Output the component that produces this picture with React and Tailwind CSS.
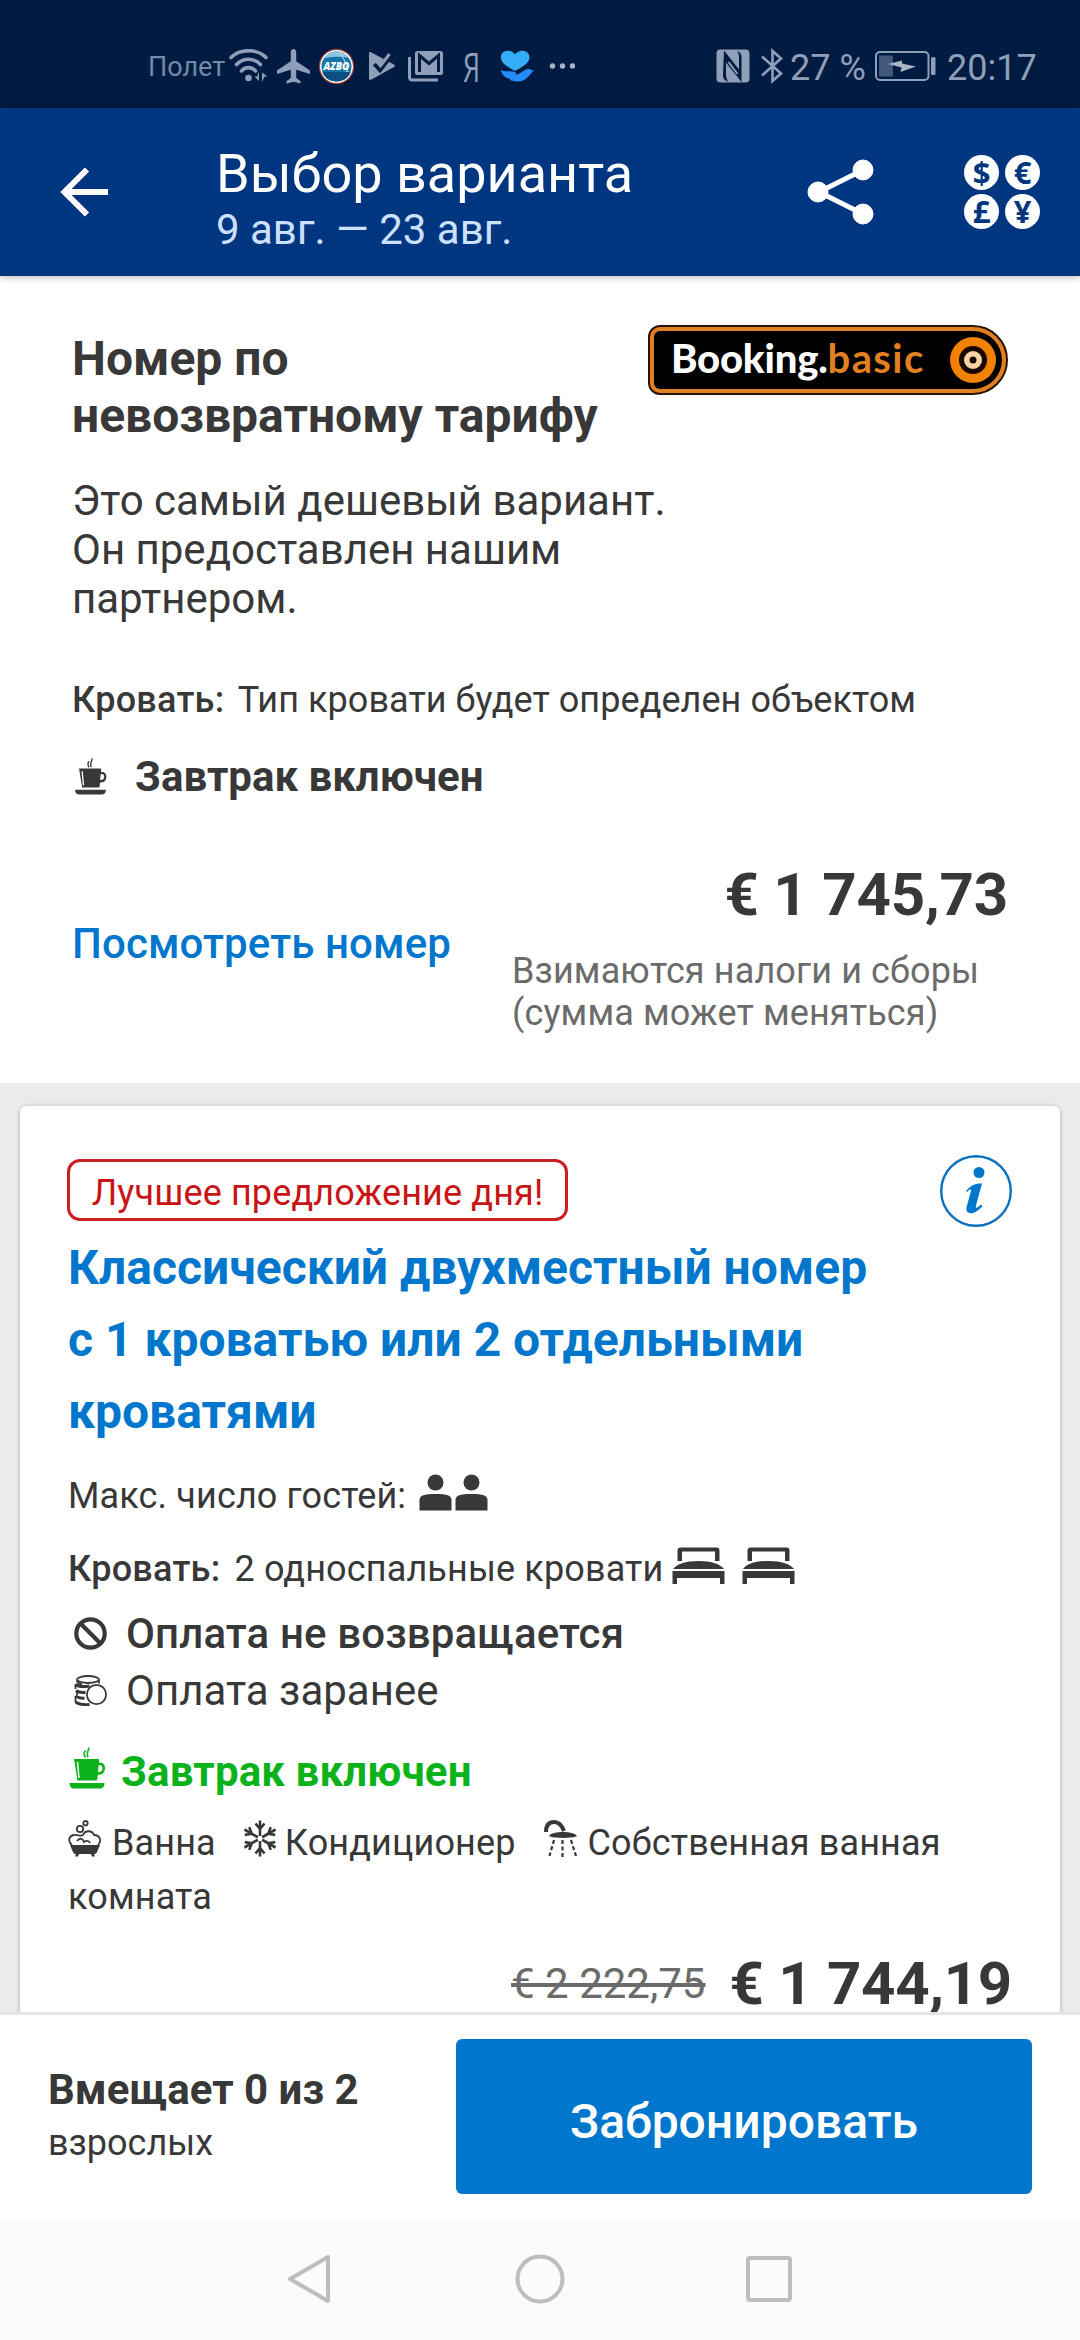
function StatusBar() {
  return (
    <div className="flex h-[108px] shrink-0 items-center bg-[#001b41] pt-6 text-[#8f9fb9]">
      <span className="ml-[148px] w-[81px] whitespace-nowrap pt-px text-[27px] leading-8 text-[#7488a8]">Полет</span>
      <WifiIcon />
      <PlaneIcon />
      <AzboIcon />
      <PlayIcon />
      <GmailIcon />
      <span className="ml-[19px] w-[17px] font-['Open_Sans'] text-[41px] leading-[41px] tracking-tighter"><span className="inline-block origin-left scale-x-[0.66]">Я</span></span>
      <HeartHandIcon />
      <svg className="ml-[14px] shrink-0" width="26" height="8" viewBox="0 0 26 8" fill="#a7b3c7">
        <circle cx="3.5" cy="4" r="2.7" />
        <circle cx="13.5" cy="4" r="2.7" />
        <circle cx="23.5" cy="4" r="2.7" />
      </svg>
      <div className="ml-auto flex items-center pr-[45px]">
        <NfcIcon />
        <BluetoothIcon />
        <span className="ml-[6px] w-[85px] whitespace-nowrap pt-[3px] text-[36px] leading-[42px]">27 %</span>
        <BatteryIcon />
        <span className="ml-[10px] w-[88px] whitespace-nowrap pt-[3px] text-[36px] leading-[42px]">20:17</span>
      </div>
    </div>
  );
}

function WifiIcon() {
  return (
    <svg className="shrink-0" width="40" height="34" viewBox="0 0 40 34" fill="none" stroke="currentColor" strokeWidth="3.6" strokeLinecap="round">
      <path d="M2 8.500C11-.5 28-.5 37 8.500" />
      <path d="M7.500 15.500C14 8.500 25 8.500 31.500 15.500" />
      <path d="M12.500 22c3.500-4.500 10.500-4.500 14 0" />
      <circle cx="19.500" cy="29" r="3.300" fill="currentColor" stroke="none" />
      <path d="M30 22.500v9.500l-4.500-4.500h2.500zM33 33v-9.500l5.500 4h-3z" fill="currentColor" stroke="none" />
    </svg>
  );
}

function PlaneIcon() {
  return (
    <svg className="ml-[7px] shrink-0" width="35" height="35" viewBox="0 0 35 35" fill="currentColor">
      <path d="M17.500 0c-1.700 0-2.700 1.300-2.700 3.200v9L1 21.500V25l13.800-4.300v8.200L10.500 32v2.600l7-1.800 7 1.800V32l-4.300-3.100v-8.200L34 25v-3.500l-13.800-9.300v-9C20.200 1.300 19.200 0 17.500 0z" />
    </svg>
  );
}

function AzboIcon() {
  return (
    <svg className="ml-[7px] shrink-0" width="37" height="37" viewBox="0 0 37 37">
      <circle cx="18.500" cy="18.500" r="17.800" fill="#8d3f36" />
      <circle cx="18.500" cy="18.500" r="16.500" fill="#fff" />
      <circle cx="18.500" cy="18.500" r="15" fill="#1674aa" />
      <path d="M6 10a15 15 0 0 1 25 0c-8-2-16-1-25 0z" fill="#8bc5e2" />
      <path d="M5 27c10 2 16-3 26-3M22 5c6 8 8 16 7 25" fill="none" stroke="#cfe6f2" />
      <path d="M4.500 24h28c-2 6-7 9.500-14 9.500S6.500 30 4.500 24z" fill="#0c4f82" />
      <text x="18.500" y="22" textAnchor="middle" fontFamily="Open Sans, sans-serif" fontWeight="800" fontStyle="italic" fontSize="10" fill="#fff">AZBO</text>
    </svg>
  );
}

function PlayIcon() {
  return (
    <svg className="ml-[13px] shrink-0" width="28" height="30" viewBox="0 0 28 30">
      <path d="M1 2.500C1 1 2.300.8 3.500 1.500L26 13.500c1.200.7 1.200 1.800 0 2.500L3.500 28.500C2 29.300 1 28.600 1 27.500z" fill="currentColor" />
      <path d="M7 12.500l5 5.500L22 5" fill="none" stroke="#001b41" strokeWidth="5.500" />
      <path d="M8.500 10.500l4 4.500L21.500 3" fill="none" stroke="currentColor" strokeWidth="3" />
    </svg>
  );
}

function GmailIcon() {
  return (
    <svg className="ml-[12px] shrink-0" width="36" height="32" viewBox="0 0 36 32">
      <path d="M1.500 7v20c0 2 1 3 3 3H30" fill="none" stroke="currentColor" strokeWidth="3" />
      <rect x="7" y="1" width="28" height="24" rx="2.500" fill="currentColor" />
      <path d="M11.500 22V5.500L21 13.500l9.500-8V22" fill="none" stroke="#001b41" strokeWidth="3" />
    </svg>
  );
}

function HeartHandIcon() {
  return (
    <svg className="ml-[20px] shrink-0" width="35" height="32" viewBox="0 0 35 32">
      <path d="M15 21C7.500 17 .8 13 .8 7.300.8 3.300 4 .7 7.800.7c3 0 5.200 1.300 7.200 3.600C17 2 19.500.7 22.300.7c4 0 7.200 2.600 7.200 6.600C29.500 13 22.500 17 15 21z" fill="#31aef5" />
      <path d="M1 19.500c3 2.500 6 1.500 9.500 1.700 4.500.3 7 1.800 5 3.600 5.500-.3 9.500-6.500 14-5.600 1.800.3 3 1.200 4.500 1.600-4 2.200-6.500 10.200-15.500 10.700-4 .2-6-1-9-1.500l1-1C6 28.500 1.500 25 1 19.500z" fill="#268cff" />
    </svg>
  );
}

function NfcIcon() {
  return (
    <svg className="shrink-0" width="34" height="34" viewBox="0 0 34 34">
      <rect x=".5" y=".5" width="33" height="33" rx="4" fill="currentColor" />
      <path d="M8 1.500l15 19V8.500c0-3-.8-5-2-7 2.200 1.500 4.500 3 4.500 6v25.500L10 13.500V25c0 3.500.8 6 2.500 8-3-1-5.500-3-5.500-6z" fill="#001b41" />
      <path d="M12.500 13l9 12" stroke="currentColor" strokeWidth="2" />
    </svg>
  );
}

function BluetoothIcon() {
  return (
    <svg className="ml-[10px] shrink-0" width="24" height="36" viewBox="0 0 24 36" fill="none" stroke="currentColor" strokeWidth="2.600">
      <path d="M2 8.500L21 25.500 12.500 33V3L21 10.500 2 27.500" />
    </svg>
  );
}

function BatteryIcon() {
  return (
    <svg className="shrink-0" width="62" height="30" viewBox="0 0 62 30">
      <rect x="1" y="1" width="52.500" height="28" rx="4" fill="none" stroke="currentColor" strokeWidth="2" />
      <rect x="4" y="4.500" width="14" height="21" fill="#42587b" />
      <path d="M13 13l14-3.500v3l14 3-15.500 5.500 1-4.500z" fill="#a7b3c7" />
      <rect x="56" y="6" width="4.500" height="18" rx="1.500" fill="currentColor" />
    </svg>
  );
}

const currencies = ['$', '€', '£', '¥'];

function Header() {
  return (
    <header className="relative z-10 flex h-[168px] shrink-0 items-center bg-[#003580] text-white shadow-[0_1px_7px_rgba(0,0,0,0.3)]">
      <svg className="ml-[60px] shrink-0" width="48" height="50" viewBox="0 0 48 50" fill="none" stroke="white" strokeWidth="6">
        <path d="M48 25H6M27 2.500L4.500 25 27 47.500" />
      </svg>
      <div className="ml-[108px] mt-3 w-[591px]">
        <h1 className="text-[54px] leading-[63px]">Выбор варианта</h1>
        <p className="text-[42px] leading-[49px] text-[#cce1ff]">9 авг. — 23 авг.</p>
      </div>
      <svg className="shrink-0" width="67" height="66" viewBox="0 0 67 66" fill="white" stroke="white">
        <path d="M56 11L12 33l44 22" fill="none" strokeWidth="5" />
        <circle cx="56" cy="11" r="10" />
        <circle cx="11" cy="33" r="10" />
        <circle cx="56" cy="55" r="10" />
      </svg>
      <div className="ml-[90px] grid grid-cols-2 gap-x-[6px] gap-y-1">
        {currencies.map((sign) => (
          <span key={sign} className="flex h-[35px] w-[35px] items-center justify-center rounded-full bg-white font-['Open_Sans'] text-[31px] font-bold leading-[35px] text-[#003580]">
            {sign}
          </span>
        ))}
      </div>
    </header>
  );
}

function BookingBasic() {
  return (
    <div className="flex h-[70px] w-[360px] shrink-0 rounded-l-[12px] rounded-r-[35px] border-2 border-[#2a1200] bg-[#e08020] p-[4px]">
      <div className="flex flex-1 items-center justify-between rounded-l-[6px] rounded-r-[29px] bg-black pl-[17px] pr-[6px]">
        <span className="whitespace-nowrap pb-[5px] font-['Lato'] text-[40px] font-black leading-[48px] tracking-[-0.2px] text-white">
          Booking.<span className="font-bold tracking-[1.4px] text-[#e08020]">basic</span>
        </span>
        <svg className="shrink-0" width="46" height="46" viewBox="0 0 46 46">
          <circle cx="23" cy="23" r="23" fill="#f28200" />
          <circle cx="23" cy="23" r="14" fill="#160800" />
          <circle cx="23" cy="23" r="9" fill="#fbd3a5" />
          <circle cx="23" cy="23" r="3.500" fill="#160800" />
        </svg>
      </div>
    </div>
  );
}

function CupIcon({ className }) {
  return (
    <svg className={className} viewBox="0 0 37 42" fill="currentColor">
      <path d="M5.500 12h25v4c3-.8 6 .8 6 5 0 4.500-3 7.500-7 6.500l-1 6H9zM30 18.500l-.5 6.500c3 .5 4.500-1.500 4.500-4 0-2.300-1.700-3.500-4-2.500z" fillRule="evenodd" />
      <path d="M1 36h35c0 3.500-1.500 5.500-5 5.500H6C2.500 41.500 1 39.500 1 36z" />
      <path d="M9 15l1.500 16" stroke="white" strokeWidth="1.500" />
      <path d="M17 10.500c-2-2.500-2-4.500 0-7M19.500 10.500c-2.200-4 .5-6.500 1-10" fill="none" stroke="currentColor" strokeWidth="1.500" />
    </svg>
  );
}

function CheapestRoom() {
  return (
    <section className="h-[807px] shrink-0 bg-white pl-[72px] pr-[72px] pt-[49px]">
      <div className="flex items-start justify-between">
        <h2 className="mt-[5px] text-[48px] font-bold leading-[57px]">Номер по<br />невозвратному тарифу</h2>
        <BookingBasic />
      </div>
      <p className="mt-8 text-[42px] leading-[49px]">Это самый дешевый вариант.<br />Он предоставлен нашим<br />партнером.</p>
      <p className="mt-14 text-[36px] leading-[42px] tracking-[0.06px]"><span className="mr-[5px] font-medium tracking-[0.25px]">Кровать:</span> Тип кровати будет определен объектом</p>
      <div className="mt-[31px] flex items-center text-[42px] leading-[49px]">
        <CupIcon className="ml-[2px] h-[37px] w-[33px]" />
        <span className="ml-[28px] font-bold">Завтрак включен</span>
      </div>
      <div className="mt-[59px] flex justify-between">
        <a className="mt-[59px] text-[42px] font-medium leading-[49px] tracking-[0.12px] text-[#0077cc]">Посмотреть номер</a>
        <div className="w-[496px]">
          <div className="text-right text-[60px] font-bold leading-[70px] tracking-[-0.2px]">€ 1 745,73</div>
          <p className="mt-5 text-[36px] leading-[42px] tracking-[0.12px] text-[#6b6b6b]">Взимаются налоги и сборы<br />(сумма может меняться)</p>
        </div>
      </div>
    </section>
  );
}

function PersonIcon() {
  return (
    <svg width="33" height="37" viewBox="0 0 33 37" fill="currentColor">
      <circle cx="16.500" cy="8.500" r="8" />
      <path d="M.5 36.500V26c0-4.500 4.500-6 16-6s16 1.500 16 6v10.500z" />
    </svg>
  );
}

function BedIcon() {
  return (
    <svg width="53" height="37" viewBox="0 0 53 37" fill="currentColor">
      <path d="M5.500 14V3.500C5.500 1.500 6.500.5 8.500.5h36c2 0 3 1 3 3V14h-4.500V4.500H10V14z" />
      <path d="M1 22c4-5 12-8 25.500-8S48 17 52 22z" />
      <path d="M.5 24h52v13h-4.500v-6H5v6H.5z" />
    </svg>
  );
}

function NoRefundIcon() {
  return (
    <svg width="33" height="33" viewBox="0 0 33 33" fill="none" stroke="currentColor" strokeWidth="4.200">
      <circle cx="16.500" cy="16.500" r="14.200" />
      <path d="M6.500 6.500l20 20" />
    </svg>
  );
}

function CoinsIcon() {
  return (
    <svg width="33" height="31" viewBox="0 0 33 31" fill="none" stroke="currentColor" strokeWidth="1.800">
      <ellipse cx="14" cy="4.500" rx="11" ry="3.500" />
      <path d="M3 5c0 3 2 4 5 4.500M25 5v3.500" />
      <path d="M1.500 9.500c3 2.500 8 2.500 14 1.500M2 15.500c3 2.200 6 2.200 9.500 1.700M1.500 21c3 2 6 2.500 9 2M1.500 27c4 3 9 3 14 2.500" strokeWidth="3" />
      <path d="M1.500 9v5M3 16v4M1.500 21v6" />
      <circle cx="22.500" cy="19.500" r="9.600" fill="white" />
    </svg>
  );
}

function BathIcon() {
  return (
    <svg className="mr-[10px] inline-block align-[-2px]" width="34" height="37" viewBox="0 0 34 37" fill="none" stroke="currentColor" strokeWidth="1.800">
      <circle cx="12" cy="9" r="3.200" />
      <circle cx="17.500" cy="3.200" r="2.200" />
      <path d="M4 25c-4-3-4-9 2-10 4-1 6 2 9 0 2-5 9-5 11 0 6 0 8 6 4 10" />
      <path d="M9 21c3-4 6-2 7 1 3-2 5-1 6 1" />
      <path d="M2 25h30l-3 7c-.6 1.500-1.500 2-3 2l1 2.500h-3L23 34H11l-1 2.500H7L8 34c-1.500 0-2.400-.5-3-2z" fill="currentColor" stroke="none" />
    </svg>
  );
}

function SnowIcon() {
  return (
    <svg className="ml-[27px] mr-[8px] inline-block align-[-2px]" width="34" height="37" viewBox="0 0 34 37" fill="none" stroke="currentColor" strokeWidth="2.600">
      {[0, 60, 120, 180, 240, 300].map((angle) => (
        <path key={angle} transform={`rotate(${angle} 17 18.500)`} d="M17 16V.5M12.500 3.500L17 9l4.500-5.500" />
      ))}
    </svg>
  );
}

function ShowerIcon() {
  return (
    <svg className="ml-[28px] mr-[10px] inline-block align-[-2px]" width="34" height="37" viewBox="0 0 34 37" fill="none" stroke="currentColor">
      <path d="M2 12C2 5 5 2 10 2s8 3.500 10 9" strokeWidth="4" />
      <path d="M5 16c1.500-3 8-4 14-4s12 1 14 4c-4 2.500-24 2.500-28 0z" fill="currentColor" stroke="none" />
      <path d="M10 20L5.500 36M18.500 20v17M27 20l5 16" strokeWidth="2.200" strokeDasharray="4 2.500" />
    </svg>
  );
}

function RoomCard() {
  return (
    <section className="mx-5 mt-[23px] h-[1000px] shrink-0 rounded-[6px] bg-white px-[48px] pt-[49px] text-[36px] leading-[42px] tracking-[0.14px] shadow-[0_1px_5px_rgba(0,0,0,0.28)]">
      <div className="-ml-px flex items-start justify-between">
        <div className="mt-1 flex h-[62px] w-[501px] items-center justify-center whitespace-nowrap rounded-[13px] border-[3px] border-[#cc1f1f] pt-[5px] text-[#c81414]">Лучшее предложение дня!</div>
        <svg width="72" height="72" viewBox="0 0 72 72">
          <circle cx="36" cy="36" r="34.800" fill="none" stroke="#0b72bd" strokeWidth="2.400" />
          <circle cx="39" cy="17.500" r="5.500" fill="#0077cc" />
          <path d="M26 36c5-6 10-8 16-7.500l-6 22c-.8 3 1 3 5-1l1.500 1.500C38 56.500 33 59 29.500 58c-3.500-1-3.500-4-2.500-7.500l4-14.500c.6-2.500-.8-2.500-4 1z" fill="#0077cc" />
        </svg>
      </div>
      <h2 className="mt-[5px] text-[48px] font-bold leading-[72px] tracking-normal text-[#0077cc]">Классический двухместный номер<br />с 1 кроватью или 2 отдельными<br />кроватями</h2>
      <div className="mt-[27px] flex items-start">
        <span className="w-[351px] whitespace-nowrap">Макс. число гостей:</span>
        <span className="-mt-px flex gap-[3px]"><PersonIcon /><PersonIcon /></span>
      </div>
      <div className="mt-[31px] flex items-start">
        <span className="w-[604px] whitespace-nowrap"><span className="mr-[5px] font-medium tracking-[0.25px]">Кровать:</span> 2 односпальные кровати</span>
        <span className="-mt-px flex gap-[17px]"><BedIcon /><BedIcon /></span>
      </div>
      <div className="mt-[19px] flex items-center gap-[19px] pl-[6px] text-[42px] leading-[49px]">
        <NoRefundIcon />
        <span className="font-medium">Оплата не возвращается</span>
      </div>
      <div className="mt-2 flex items-center gap-[19px] pl-[6px] text-[42px] leading-[49px] tracking-normal">
        <CoinsIcon />
        <span>Оплата заранее</span>
      </div>
      <div className="mt-8 flex items-start gap-[15px] text-[42px] font-bold leading-[49px] text-[#0bb21b]">
        <CupIcon className="h-[42px] w-[38px]" />
        <span>Завтрак включен</span>
      </div>
      <p className="mt-5 leading-[54px]">
        <BathIcon />Ванна<SnowIcon />Кондиционер<ShowerIcon />Собственная ванная<br />комната
      </p>
      <div className="mt-[25px] flex items-baseline justify-end gap-[24px] leading-[70px]">
        <span className="relative -top-[6px] text-[42px] leading-[49px] tracking-normal text-[#6b6b6b] line-through">€ 2 222,75</span>
        <span className="text-[60px] font-bold tracking-[-0.3px]">€ 1 744,19</span>
      </div>
    </section>
  );
}

function BookingFooter() {
  return (
    <footer className="flex h-[206px] shrink-0 items-start justify-between border-t-[3px] border-[#e6e6e6] bg-white pl-[48px] pr-[48px]">
      <div className="mt-[50px]">
        <div className="text-[42px] font-bold leading-[49px]">Вмещает 0 из 2</div>
        <div className="mt-[8px] text-[36px] leading-[42px]">взрослых</div>
      </div>
      <button className="mt-6 h-[155px] w-[576px] rounded-[6px] bg-[#0077cc] pt-[11px] text-[48px] font-medium text-white">Забронировать</button>
    </footer>
  );
}

function NavigationBar() {
  return (
    <nav className="flex flex-1 items-start bg-[#fbfbfb] pt-[36px]">
      <svg className="ml-[286px]" width="46" height="50" viewBox="0 0 46 50" fill="none" stroke="#bdbdbd" strokeWidth="4" strokeLinejoin="round">
        <path d="M42 3v44L4 25z" />
      </svg>
      <svg className="ml-[183px]" width="50" height="50" viewBox="0 0 50 50" fill="none" stroke="#bdbdbd" strokeWidth="4">
        <circle cx="25" cy="25" r="22.500" />
      </svg>
      <svg className="ml-[180px] mt-[2px]" width="48" height="46" viewBox="0 0 48 46" fill="none" stroke="#bdbdbd" strokeWidth="4">
        <rect x="3" y="2" width="42" height="42" rx="2" />
      </svg>
    </nav>
  );
}

export default function App() {
  return (
    <div className="flex h-[2340px] w-[1080px] flex-col overflow-hidden bg-white font-['Roboto',sans-serif] text-[#383838]">
      <StatusBar />
      <Header />
      <main className="flex h-[1736px] shrink-0 flex-col overflow-hidden bg-[#ebebeb]">
        <CheapestRoom />
        <RoomCard />
      </main>
      <BookingFooter />
      <NavigationBar />
    </div>
  );
}
